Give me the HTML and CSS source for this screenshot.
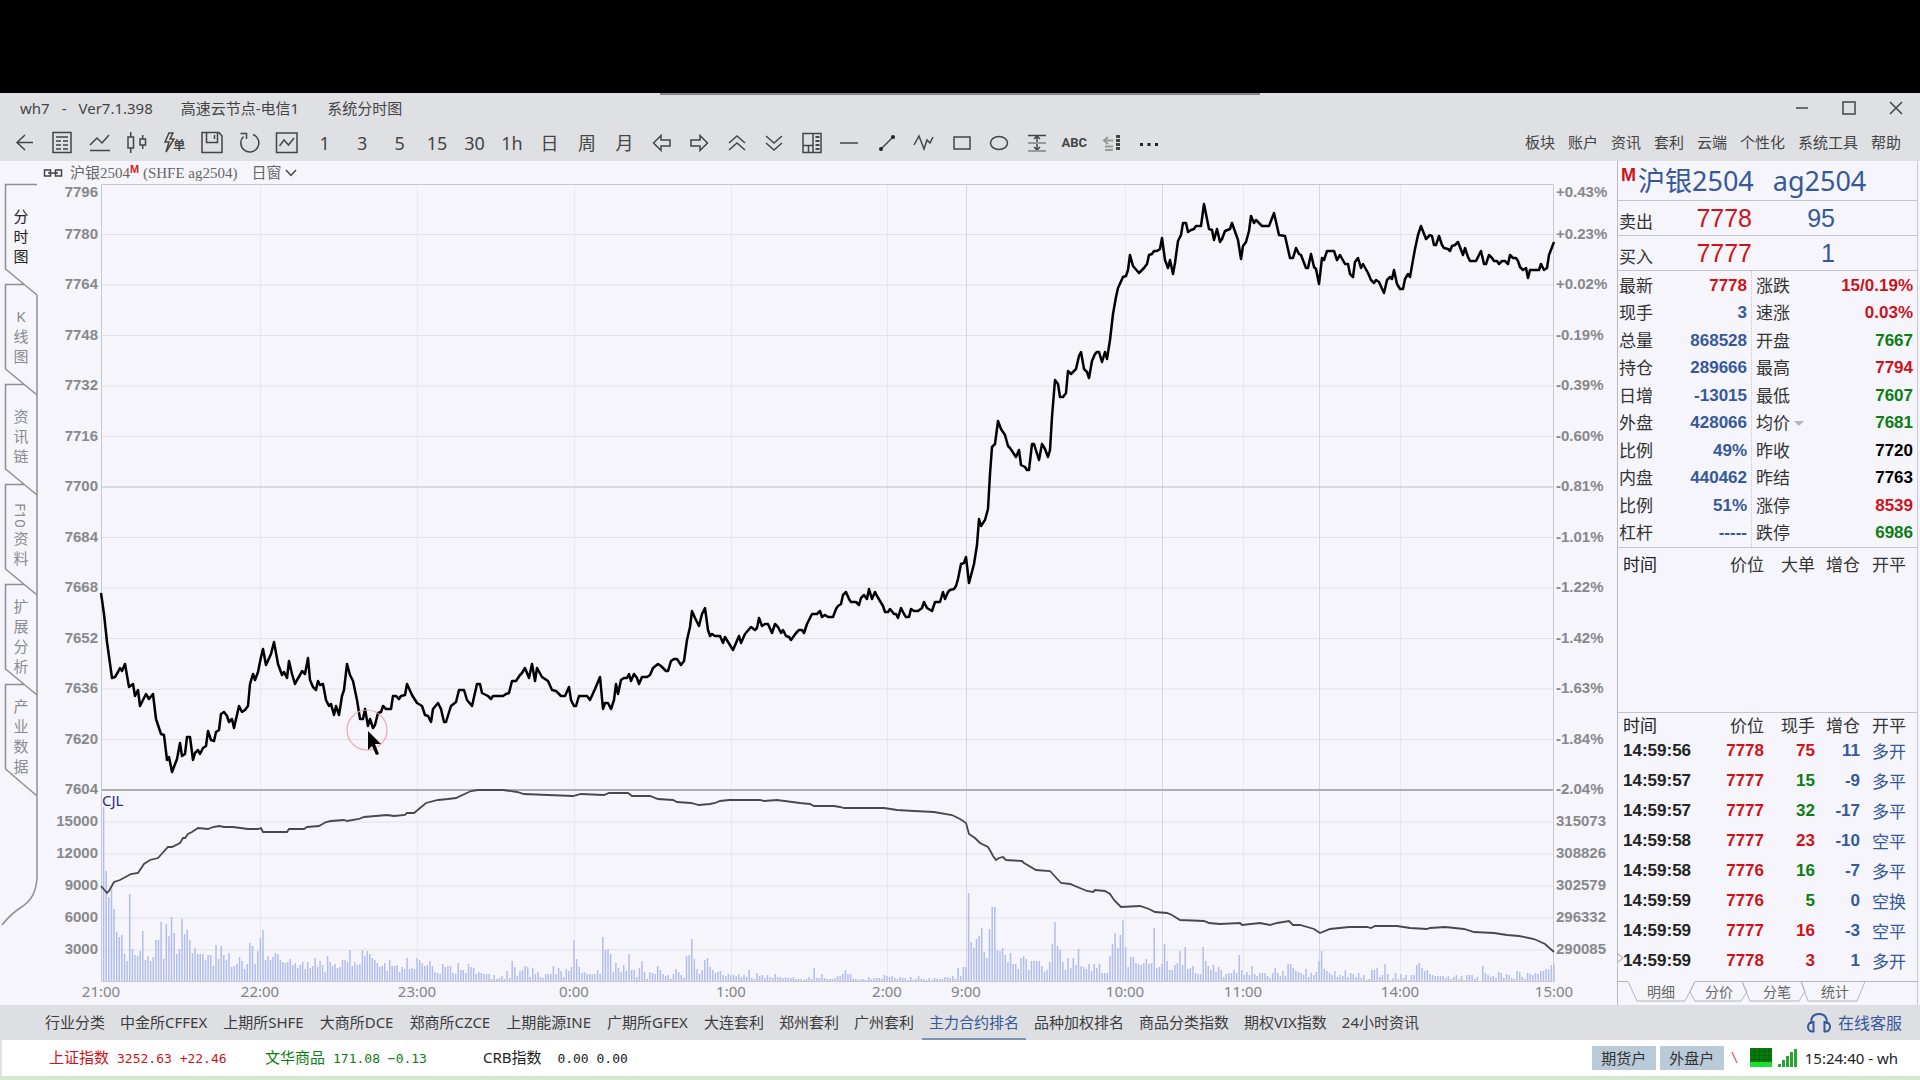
FILE: index.html
```html
<!DOCTYPE html>
<html lang="zh-CN">
<head>
<meta charset="utf-8">
<title>wh7 - 系统分时图</title>
<link rel="stylesheet" href="styles.css">
</head>
<body>
<div class="letterbox"></div>
<div class="app">
  <header class="head">
    <div class="titlebar">
      <span class="ver"><span>wh7</span><span>-</span><span>Ver7.1.398</span></span>
      <span>高速云节点-电信1</span>
      <span>系统分时图</span>
      <div class="winctl">
        <button aria-label="最小化"><svg width="16" height="16" viewBox="0 0 16 16"><path d="M2 8H14"/></svg></button>
        <button aria-label="最大化"><svg width="16" height="16" viewBox="0 0 16 16"><path d="M2 2H14V14H2Z"/></svg></button>
        <button aria-label="关闭"><svg width="16" height="16" viewBox="0 0 16 16"><path d="M2 2L14 14M14 2L2 14"/></svg></button>
      </div>
    </div>
    <div class="toolbar">
      <div class="tools">
        <button aria-label="返回"><svg class="ic" viewBox="0 0 24 24"><path d="M20 11.500H4M12 4L4 11.500L12 19"/></svg></button>
        <button aria-label="报价"><svg class="ic" viewBox="0 0 24 24"><path d="M3 1.500H21V21.500H3ZM6 6H18M6 10H11M6 14H11M6 18H11M13 10H18M13 14H18M13 18H18"/></svg></button>
        <button aria-label="分时"><svg class="ic" viewBox="0 0 24 24"><path d="M2 14L9 7L14 12L21 4M2 19.500H22"/></svg></button>
        <button aria-label="K线"><svg class="ic" viewBox="0 0 24 24"><path d="M3 6H8.500V17H3ZM5.700 1V6M5.700 17V22M15 8H20.500V14H15ZM17.700 4V8M17.700 14V18"/></svg></button>
        <button class="flash" aria-label="闪电下单"><svg class="flash-ic" viewBox="0 0 11 24"><path d="M5 2L1 11H5L2 21L10 8H6L9 2Z"/></svg><span>单</span></button>
        <button aria-label="保存"><svg class="ic" viewBox="0 0 24 24"><path d="M2 1.500H19L22 5V21.500H2ZM6.500 1.500V11.500H17.500V1.500M14.500 4V8"/></svg></button>
        <button aria-label="刷新"><svg class="ic" viewBox="0 0 24 24"><path d="M15 3.500A9 9 0 1 1 5.500 5.500M2.500 2.500H8.500V8"/></svg></button>
        <button aria-label="图表"><svg class="ic" viewBox="0 0 24 24"><path d="M1.500 2H22V21.500H1.500ZM4.500 15L9 9L13.500 14L19 7"/></svg></button>
        <button>1</button><button>3</button><button>5</button><button>15</button><button>30</button><button>1h</button>
        <button>日</button><button>周</button><button>月</button>
        <button aria-label="左移"><svg class="ic" viewBox="0 0 24 24"><path d="M3.500 12L11 4.500V9H20V15H11V19.500Z"/></svg></button>
        <button aria-label="右移"><svg class="ic" viewBox="0 0 24 24"><path d="M20.500 12L13 4.500V9H4V15H13V19.500Z"/></svg></button>
        <button aria-label="放大"><svg class="ic" viewBox="0 0 24 24"><path d="M4 12L12 5L20 12M4 19L12 12L20 19"/></svg></button>
        <button aria-label="缩小"><svg class="ic" viewBox="0 0 24 24"><path d="M4 5L12 12L20 5M4 12L12 19L20 12"/></svg></button>
        <button aria-label="布局"><svg class="ic" viewBox="0 0 24 24"><path d="M3 2.500H21V21.500H3ZM13 2.500V21.500M3 14.500H13M8.500 14.500V21.500"/><path class="dots" d="M17.500 5V20"/></svg></button>
        <button aria-label="水平线"><svg class="ic" viewBox="0 0 24 24"><path d="M3 12H21"/></svg></button>
        <button aria-label="线段"><svg class="ic" viewBox="0 0 24 24"><path d="M6 18L18 6"/><circle class="dot" cx="6" cy="18" r="2"/><circle class="dot" cx="18" cy="6" r="2"/></svg></button>
        <button aria-label="波浪线"><svg class="ic" viewBox="0 0 24 24"><path d="M2 14L7 5L12 18L15 9L18 12L21 6"/></svg></button>
        <button aria-label="矩形"><svg class="ic" viewBox="0 0 24 24"><path d="M4 6H20V18H4Z"/></svg></button>
        <button aria-label="椭圆"><svg class="ic" viewBox="0 0 24 24"><ellipse cx="12" cy="12" rx="8.500" ry="6.500"/></svg></button>
        <button aria-label="黄金分割"><svg class="ic" viewBox="0 0 24 24"><path d="M3 4.500H21M12 5V19M9 8L12 5L15 8M9 16L12 19L15 16"/><path class="soft" d="M3 12H21M3 20H21"/></svg></button>
        <button class="abc">ABC</button>
        <button aria-label="价格标记"><svg class="ic" viewBox="0 0 24 24"><path class="dash" d="M18 4V20"/><path class="soft" d="M4 9.500H13M8 6L4 9.500L8 13M5 15.500H13M5 19H13"/></svg></button>
        <button aria-label="更多"><svg class="ic" viewBox="0 0 24 24"><path class="dot" d="M3 12H6V15H3ZM10.500 12H13.500V15H10.500ZM18 12H21V15H18Z"/></svg></button>
      </div>
      <nav class="menus"><a href="#">板块</a><a href="#">账户</a><a href="#">资讯</a><a href="#">套利</a><a href="#">云端</a><a href="#">个性化</a><a href="#">系统工具</a><a href="#">帮助</a></nav>
    </div>
  </header>

  <main class="main">
    <nav class="sidetabs">
      <svg class="sideline" viewBox="0 0 38 844" preserveAspectRatio="xMinYMin meet">
        <path d="M37 23.500H5.500V108L37 134M24 123.500H5.500V208L37 234M24 223.500H5.500V308L37 334M24 323.500H5.500V408L37 434M24 423.500H5.500V508L37 534M24 523.500H5.500V608L37 635"/>
        <path d="M37 134V717C36 729 33 738 23 745C15 750 9 755 2 764"/>
      </svg>
      <button class="on"><span>分时图</span></button>
      <button><span>K线图</span></button>
      <button><span>资讯链</span></button>
      <button><span><b class="rot">F10</b>资料</span></button>
      <button><span>扩展分析</span></button>
      <button><span>产业数据</span></button>
    </nav>

    <section class="chart">
      <div class="subhead">
        <svg width="20" height="10" viewBox="0 0 20 10"><path d="M1.500 2H7.500V8H1.500ZM12.500 2H18.500V8H12.500ZM5 5H15"/></svg>
        <span class="inst">沪银2504<sup>M</sup> (SHFE ag2504)</span>
        <button class="daywin">日窗<svg width="12" height="8" viewBox="0 0 12 8"><path d="M1 1L6 6.500L11 1"/></svg></button>
      </div>
      <div class="plotrow">
        <div class="axis left">
          <ul class="price"><li><span class="first">7796</span><span>7780</span></li><li><span>7764</span></li><li><span>7748</span></li><li><span>7732</span></li><li><span>7716</span></li><li><span>7700</span></li><li><span>7684</span></li><li><span>7668</span></li><li><span>7652</span></li><li><span>7636</span></li><li><span>7620</span></li><li><span>7604</span></li></ul>
          <ul class="vol"><li><span>15000</span></li><li><span>12000</span></li><li><span>9000</span></li><li><span>6000</span></li><li><span>3000</span></li><li></li></ul>
        </div>
        <div class="plot">
          <svg class="plotsvg" viewBox="0 0 1453 798" preserveAspectRatio="none">
            <path class="grid" d="M0 50.500H1453M0 101H1453M0 151.500H1453M0 202H1453M0 252.500H1453M0 353.500H1453M0 404H1453M0 454.500H1453M0 505H1453M0 555.500H1453M0 638H1453M0 670H1453M0 702H1453M0 734H1453M0 766H1453"/>
            <path class="grid faint" d="M159.500 0V798M316.500 0V798M473.500 0V798M630.500 0V798M786.500 0V798M1024.500 0V798M1142.500 0V798M1299.500 0V798"/>
            <path class="grid session" d="M865.500 0V798M1061.500 0V798M1218.500 0V798"/>
            <path class="grid mid" d="M0 303H1453"/>
            <path id="bars" class="bars"/>
            <path class="grid base" d="M0 606H1453"/>
            <path class="grid frame" d="M0.500 0.500H1452.500V797.500H0.500Z"/>
            <polyline class="oi" points="0,702 6,709 8,707 13,698 19,696 30,690 37,689 43,680 49,676 57,674 67,663 71,663 79,659 82,654 84,654 87,650 91,648 97,644 107,645 112,643 118,642 123,643 132,643 147,645 157,645 160,644 162,648 186,648 188,645 203,645 206,643 218,642 225,638 230,637 243,636 246,637 258,635 263,633 286,631 293,632 304,631 306,629 313,629 325,619 337,616 347,615 355,614 370,607 377,606 402,606 416,608 423,610 472,612 480,610 503,611 508,609 527,609 531,612 549,612 557,615 572,616 576,618 590,619 598,621 609,620 614,619 619,617 628,616 659,616 663,617 676,616 699,619 709,620 713,622 733,622 739,623 743,624 783,624 796,626 813,627 833,628 851,631 859,635 865,639 868,650 871,652 874,654 879,659 887,663 890,668 892,672 895,676 898,674 902,673 905,676 921,677 923,679 935,686 949,687 960,699 969,700 986,707 992,708 994,706 1004,707 1009,710 1013,716 1020,723 1039,722 1048,725 1054,728 1066,729 1071,731 1079,736 1103,737 1108,739 1119,740 1139,739 1141,741 1159,739 1169,741 1176,739 1188,737 1192,741 1199,741 1213,745 1219,749 1229,745 1248,743 1266,743 1270,744 1274,742 1296,742 1309,744 1326,745 1329,744 1344,743 1363,745 1373,748 1393,749 1406,751 1418,752 1433,755 1444,760 1453,768"/>
            <polyline class="px" points="0,409 3,430 6,458 11,494 14,493 17,488 19,484 21,487 24,480 28,503 32,500 34,512 37,506 39,522 45,510 48,515 52,510 55,535 60,550 63,551 66,576 68,573 71,588 76,575 79,559 81,572 84,570 86,553 89,553 92,576 94,569 97,566 99,570 102,564 105,562 107,547 110,556 113,557 115,548 118,546 120,530 123,528 126,532 128,538 131,535 133,544 138,522 141,528 144,526 147,522 149,500 152,490 154,496 157,488 160,473 162,465 165,481 170,470 173,458 177,480 181,491 183,488 186,494 188,477 191,490 194,500 196,496 199,491 201,487 204,490 207,474 209,496 212,503 215,506 217,497 219,501 222,500 225,516 228,522 230,520 233,531 235,522 238,531 241,512 243,506 246,480 249,491 252,497 256,516 259,535 262,535 264,525 267,542 269,535 272,544 274,541 277,529 280,528 282,522 285,525 290,525 292,512 295,512 298,515 300,512 304,511 306,500 311,511 316,519 321,522 324,531 327,532 330,538 332,525 337,519 340,525 343,538 345,538 350,522 355,518 358,506 363,506 366,516 371,522 376,500 379,500 381,509 387,512 390,515 392,512 402,512 405,510 408,509 411,497 415,497 419,491 421,489 424,484 428,494 431,480 434,497 436,484 441,493 447,497 451,506 455,507 460,512 464,512 468,503 470,516 473,522 475,522 478,512 486,512 489,516 494,505 499,493 502,525 504,519 507,519 510,525 513,516 515,500 517,510 520,496 523,494 526,494 528,490 530,497 533,490 536,494 538,500 541,493 546,493 549,491 552,484 557,480 560,482 565,487 567,487 570,477 573,475 576,475 580,481 583,477 586,456 589,443 591,427 594,434 598,442 601,430 604,424 607,446 609,452 611,450 614,452 619,452 622,459 624,453 632,466 638,452 640,459 644,450 650,443 654,446 656,444 658,434 661,442 664,440 667,440 671,449 674,440 677,443 680,449 682,446 685,452 688,453 690,456 695,449 698,446 701,446 703,449 706,440 711,430 716,430 719,427 721,433 724,431 727,433 732,433 735,425 737,422 740,420 742,411 745,408 748,415 750,418 755,418 758,421 760,414 763,411 766,415 768,405 771,415 774,408 776,412 779,417 782,422 784,428 787,428 789,425 793,430 795,430 797,434 800,424 803,430 805,433 808,433 810,425 813,427 817,427 821,424 823,418 826,424 831,427 834,418 839,418 842,408 844,415 847,408 849,406 853,405 855,402 857,395 860,380 863,379 865,373 868,399 873,380 876,361 878,335 880,342 884,336 887,325 889,290 891,263 894,260 897,237 900,245 904,251 907,262 909,264 915,273 918,266 920,281 924,283 926,286 928,286 931,260 933,260 938,276 941,260 944,265 947,273 949,266 951,233 954,196 957,200 959,213 962,213 965,209 967,187 970,190 975,185 978,172 980,168 983,185 986,188 988,194 991,177 994,170 996,168 998,168 1001,178 1004,168 1006,175 1009,156 1012,130 1015,113 1017,104 1022,93 1025,92 1027,86 1029,71 1032,82 1038,89 1043,84 1046,80 1048,71 1051,70 1053,67 1056,67 1059,65 1061,54 1064,76 1067,84 1069,76 1072,90 1074,79 1077,57 1080,51 1082,39 1085,39 1087,48 1090,46 1093,45 1095,42 1100,42 1103,20 1108,45 1111,46 1113,56 1116,45 1119,58 1121,55 1124,47 1129,45 1131,39 1137,56 1140,75 1142,62 1145,58 1148,47 1150,32 1153,39 1155,36 1158,39 1161,42 1168,42 1173,29 1178,51 1184,52 1189,74 1192,74 1195,64 1198,70 1200,71 1205,84 1207,84 1210,70 1213,83 1215,85 1218,100 1221,74 1223,76 1226,67 1233,67 1236,76 1239,71 1244,80 1247,80 1249,90 1252,93 1254,78 1257,74 1260,84 1262,80 1267,89 1270,96 1273,99 1275,96 1278,98 1283,109 1286,96 1289,93 1291,95 1293,86 1296,100 1299,105 1302,105 1304,95 1307,90 1309,93 1312,76 1314,65 1317,51 1320,42 1325,55 1329,51 1331,52 1333,61 1335,61 1338,52 1341,61 1343,64 1347,65 1349,67 1351,62 1354,61 1357,58 1362,71 1364,64 1367,73 1369,77 1375,77 1380,67 1383,80 1385,80 1388,71 1391,74 1393,77 1396,77 1398,80 1401,77 1404,77 1407,80 1409,71 1412,74 1415,74 1417,77 1419,83 1422,86 1425,84 1427,94 1429,86 1438,86 1440,80 1443,86 1446,84 1448,71 1453,58"/>
          </svg>
          <span class="cjl">CJL</span>
          <svg class="pointer" width="44" height="50" viewBox="0 0 44 50"><circle cx="22" cy="22" r="20"/><path d="M23 23V42L27 38L31 47L34 46L30 36H36Z"/></svg>
        </div>
        <div class="axis right">
          <ul class="price"><li><span class="first">+0.43%</span><span>+0.23%</span></li><li><span>+0.02%</span></li><li><span>-0.19%</span></li><li><span>-0.39%</span></li><li><span>-0.60%</span></li><li><span>-0.81%</span></li><li><span>-1.01%</span></li><li><span>-1.22%</span></li><li><span>-1.42%</span></li><li><span>-1.63%</span></li><li><span>-1.84%</span></li><li><span>-2.04%</span></li></ul>
          <ul class="vol"><li><span>315073</span></li><li><span>308826</span></li><li><span>302579</span></li><li><span>296332</span></li><li><span>290085</span></li><li></li></ul>
        </div>
      </div>
      <div class="times"><span>21:00</span><span>22:00</span><span>23:00</span><span>0:00</span><span>1:00</span><span>2:00</span><span>9:00</span><span>10:00</span><span>11:00</span><span>14:00</span><span>15:00</span></div>
    </section>

    <aside class="panel">
      <h1 class="name"><sup>M</sup><span>沪银2504</span><span class="code">ag2504</span></h1>
      <div class="ask"><span>卖出</span><b class="red">7778</b><b class="blue">95</b></div>
      <div class="ask"><span>买入</span><b class="red">7777</b><b class="blue">1</b></div>
      <div class="quotes">
        <dl>
          <div><dt>最新</dt><dd class="red">7778</dd></div>
          <div><dt>现手</dt><dd>3</dd></div>
          <div><dt>总量</dt><dd>868528</dd></div>
          <div><dt>持仓</dt><dd>289666</dd></div>
          <div><dt>日增</dt><dd>-13015</dd></div>
          <div><dt>外盘</dt><dd>428066</dd></div>
          <div><dt>比例</dt><dd>49%</dd></div>
          <div><dt>内盘</dt><dd>440462</dd></div>
          <div><dt>比例</dt><dd>51%</dd></div>
          <div><dt>杠杆</dt><dd>-----</dd></div>
        </dl>
        <dl>
          <div><dt>涨跌</dt><dd class="red">15/0.19%</dd></div>
          <div><dt>速涨</dt><dd class="red">0.03%</dd></div>
          <div><dt>开盘</dt><dd class="green">7667</dd></div>
          <div><dt>最高</dt><dd class="red">7794</dd></div>
          <div><dt>最低</dt><dd class="green">7607</dd></div>
          <div><dt>均价<i class="tri"></i></dt><dd class="green">7681</dd></div>
          <div><dt>昨收</dt><dd class="black">7720</dd></div>
          <div><dt>昨结</dt><dd class="black">7763</dd></div>
          <div><dt>涨停</dt><dd class="red">8539</dd></div>
          <div><dt>跌停</dt><dd class="green">6986</dd></div>
        </dl>
      </div>
      <div class="big">
        <table class="ticks">
          <colgroup><col class="c1"><col class="c2"><col class="c3"><col class="c4"><col class="c5"></colgroup>
          <thead><tr><th>时间</th><th>价位</th><th>大单</th><th>增仓</th><th>开平</th></tr></thead>
        </table>
      </div>
      <div class="trades">
        <table class="ticks">
          <colgroup><col class="c1"><col class="c2"><col class="c3"><col class="c4"><col class="c5"></colgroup>
          <thead><tr><th>时间</th><th>价位</th><th>现手</th><th>增仓</th><th>开平</th></tr></thead>
          <tbody>
            <tr><td>14:59:56</td><td>7778</td><td class="red">75</td><td>11</td><td>多开</td></tr>
            <tr><td>14:59:57</td><td>7777</td><td class="green">15</td><td>-9</td><td>多平</td></tr>
            <tr><td>14:59:57</td><td>7777</td><td class="green">32</td><td>-17</td><td>多平</td></tr>
            <tr><td>14:59:58</td><td>7777</td><td class="red">23</td><td>-10</td><td>空平</td></tr>
            <tr><td>14:59:58</td><td>7776</td><td class="green">16</td><td>-7</td><td>多平</td></tr>
            <tr><td>14:59:59</td><td>7776</td><td class="green">5</td><td>0</td><td>空换</td></tr>
            <tr><td>14:59:59</td><td>7777</td><td class="red">16</td><td>-3</td><td>空平</td></tr>
            <tr><td>14:59:59</td><td>7778</td><td class="red">3</td><td>1</td><td>多开</td></tr>
          </tbody>
        </table>
        <svg class="mark" width="6" height="10" viewBox="0 0 6 10"><path d="M0 1L5 5L0 9"/></svg>
      </div>
      <nav class="ptabs">
        <svg class="ptline" width="300" height="22" viewBox="0 0 300 22"><path d="M0 .5H10L19 20H67L77 .5H300M72 11L77 20H123L129 11M77 .5L72 11M124 .5L132 20H181L187 10M183 .5L190 20H239L247 .5M124 .5L129 11M183 .5L187 10"/></svg>
        <button>明细</button><button>分价</button><button>分笔</button><button>统计</button>
      </nav>
    </aside>
  </main>

  <nav class="markets">
    <a href="#">行业分类</a><a href="#" class="lat">中金所CFFEX</a><a href="#" class="lat">上期所SHFE</a><a href="#" class="lat">大商所DCE</a><a href="#" class="lat">郑商所CZCE</a><a href="#" class="lat">上期能源INE</a><a href="#" class="lat">广期所GFEX</a><a href="#">大连套利</a><a href="#">郑州套利</a><a href="#">广州套利</a><a href="#" class="on">主力合约排名</a><a href="#">品种加权排名</a><a href="#">商品分类指数</a><a href="#">期权VIX指数</a><a href="#">24小时资讯</a>
    <a href="#" class="service"><svg width="24" height="22" viewBox="0 0 24 22"><path d="M4 12V11C4 5 7 2 12 2S20 5 20 11V12M6.500 10V19.500C3 20 1 18 1 15S3 10 6.500 10ZM17.500 10V19.500C21 20 23 18 23 15S21 10 17.500 10Z"/></svg>在线客服</a>
  </nav>
  <footer class="status">
    <span class="red ix1">上证指数<code>3252.63 +22.46</code></span>
    <span class="green ix2">文华商品<code>171.08 −0.13</code></span>
    <span class="ix3">CRB指数 &nbsp;<code>0.00 0.00</code></span>
    <div class="right">
      <button class="acct">期货户</button><button class="acct">外盘户</button>
      <svg width="8" height="16" viewBox="0 0 8 16"><path class="slash" d="M1 2L6 13"/></svg>
      <svg class="led" width="22" height="20" viewBox="0 0 22 20"><path fill="#087a10" d="M0 0H22V14H0Z"/><path fill="#19e02c" d="M0 14H22V19H0Z"/><path stroke="#064d0a" stroke-opacity=".4" d="M0 3.500H22M0 7.500H22M0 11.500H22M4.500 0V14M9.500 0V14M14.500 0V14M18.500 0V14"/></svg>
      <svg class="sig" width="19" height="20" viewBox="0 0 19 20"><path fill="#2ba336" d="M0 16H3V19H0ZM4 12H7V19H4ZM8 8H11V19H8ZM12 4H15V19H12ZM16 1H19V19H16Z"/></svg>
      <span class="clock">15:24:40 - wh</span>
    </div>
  </footer>
  <div class="edge"></div>
</div>
<script src="chart.js"></script>
</body>
</html>
```
FILE: styles.css
```css
* { box-sizing: border-box; }
body {
  margin: 0;
  min-height: 100vh;
  display: flex;
  flex-direction: column;
  background: #000;
  color: #333;
  font: 15px/20px "Noto Sans", "Noto Sans CJK SC", sans-serif;
}
button {
  border: 0;
  padding: 0;
  background: none;
  color: inherit;
  font: inherit;
}
a { color: inherit; text-decoration: none; }
ul, dl, dd { margin: 0; padding: 0; list-style: none; }
svg { fill: none; stroke: #444; stroke-width: 1.5; display: block; }
.red { color: #cf1219; }
.green { color: #0c7d12; }
.blue { color: #35599a; }
.black { color: #000; }

.letterbox { height: 93px; background: #000; }
.app {
  flex: 1;
  display: flex;
  flex-direction: column;
  background: #f5f5fb;
}

/* title bar and toolbar */
.head { background: #dfe0e4; position: relative; color: #444; }
.head::before {
  content: "";
  position: absolute;
  left: 660px;
  top: 0;
  width: 600px;
  height: 2px;
  background: #85868a;
}
.titlebar { display: flex; align-items: center; gap: 28px; height: 32px; padding: 0 0 2px 20px; }
.ver { display: flex; gap: 12px; }
.winctl { display: flex; gap: 31px; margin: 0 16px 0 auto; }
.toolbar { display: flex; align-items: center; justify-content: space-between; height: 36px; }
.tools { display: grid; grid-template-columns: repeat(31, 1fr); width: 1162px; margin-left: 6px; }
.tools button {
  display: flex;
  align-items: center;
  justify-content: center;
  height: 36px;
  font-size: 18px;
}
.ic { width: 24px; height: 24px; }
.flash-ic { width: 11px; height: 24px; }
.flash span { font-size: 12px; font-weight: 700; line-height: 12px; padding-top: 6px; margin-left: -2px; }
.ic .dot { fill: #222; stroke: none; }
.ic .soft { stroke: #999; stroke-width: 2; }
.ic .dash { stroke-width: 4; stroke-dasharray: 3 1; }
.ic .dots { stroke-width: 4; stroke-dasharray: 2 2; }
.tools .abc { font: 700 13px/20px Roboto, sans-serif; }
.menus { display: flex; gap: 13px; padding: 0 19px 2px 0; }

.main {
  flex: 1;
  display: grid;
  grid-template-columns: 38px 1fr 301px;
  padding-right: 2px;
}

/* vertical page tabs */
.sidetabs { position: relative; padding-top: 23px; color: #8b8b90; }
.sideline { position: absolute; left: 0; top: 0; width: 38px; height: 844px; stroke: #8e8e94; }
.sidetabs button {
  position: relative;
  display: flex;
  align-items: center;
  justify-content: center;
  width: 38px;
  height: 100px;
  padding: 3px 0 0 4px;
}
.sidetabs button span { width: 16px; line-height: 20px; word-break: break-all; text-align: center; }
.sidetabs .on { color: #222; }
.rot { display: block; font-weight: 400; writing-mode: vertical-rl; line-height: 16px; }

/* chart */
.chart { display: flex; flex-direction: column; min-width: 0; }
.subhead {
  display: flex;
  align-items: center;
  height: 23px;
  padding-left: 5px;
  font: 15px/20px "Liberation Serif", "Noto Sans CJK SC", serif;
  color: #666;
}
.subhead .inst { padding-left: 7px; }
.subhead sup { font: 700 11px/10px "Liberation Sans", sans-serif; color: #e02020; vertical-align: 5px; }
.daywin { display: flex; align-items: center; gap: 3px; margin-left: 14px; }
.plotrow { flex: 1; display: grid; grid-template-columns: 63px 1fr 63px; }
.plot { position: relative; min-width: 0; }
.plotsvg { position: absolute; left: 0; top: 0; width: 100%; height: 100%; overflow: visible; }
.plotsvg * { vector-effect: non-scaling-stroke; }
.grid { stroke: #e1e1e8; stroke-width: 1; }
.faint { stroke: #e8e8ef; }
.session { stroke: #d6d6de; }
.mid { stroke: #bcbcc4; }
.base { stroke: #aeaeb4; stroke-width: 2; }
.frame { stroke: #c8c8d0; }
.bars { stroke: #b2bdec; stroke-width: 1.5; }
.oi { stroke: #48484c; stroke-width: 1.8; }
.px { stroke: #000; stroke-width: 2.5; stroke-linejoin: round; }
.cjl { position: absolute; left: 1px; top: 76%; color: #2b2b88; }
.pointer { position: absolute; left: 16.8%; top: 65.7%; stroke: #eda6ae; stroke-width: 1.2; }
.pointer path { fill: #000; stroke: none; }

.axis { display: flex; flex-direction: column; font: 700 15px/20px "Liberation Sans", Arial, sans-serif; color: #88888c; }
.axis ul { display: grid; grid-auto-rows: 1fr; }
.axis .price { flex: 606 1 0; }
.axis .vol { flex: 192 1 0; }
.axis li { display: flex; flex-direction: column; justify-content: flex-end; min-height: 0; }
.axis li span { margin-bottom: -9px; }
.axis li .first { margin: -2px 0 auto; }
.left { text-align: right; padding-right: 3px; }
.right ul { padding-left: 2px; }
.times {
  display: grid;
  grid-template-columns: 159fr 157fr 157fr 157fr 156fr 79fr 159fr 118fr 157fr 154fr 0;
  margin: 0 63px;
  height: 23px;
  line-height: 18px;
  color: #838388;
}
.times span { width: 40px; margin-left: -20px; text-align: center; }

/* quote panel */
.panel {
  display: flex;
  flex-direction: column;
  border-left: 1px solid #b9b9c0;
  border-right: 1px solid #c9c9d0;
}
.name { display: flex; height: 39px; margin: 0; padding-left: 3px; font-weight: 400; font-size: 27px; line-height: 40px; color: #35599a; }
.name sup { font: 700 18px/28px "Liberation Sans", sans-serif; color: #cf1219; width: 17px; }
.name .code { margin-left: 19px; }
.ask {
  display: grid;
  grid-template-columns: 54px 79px 83px;
  align-items: center;
  height: 35px;
  padding-left: 1px;
  border-top: 1px solid #c4c4cb;
  font-size: 17px;
}
.ask span { padding-top: 8px; }
.ask b { font: 25px/32px "Liberation Sans", Arial, sans-serif; text-align: right; }
.quotes {
  display: grid;
  grid-template-columns: 134px 1fr;
  height: 278px;
  border-top: 1px solid #c4c4cb;
  border-bottom: 1px solid #c4c4cb;
  font-size: 17px;
}
.quotes dl { display: grid; grid-auto-rows: 1fr; padding: 1px 4px 0 1px; }
.quotes dl:first-child { border-right: 1px dotted #c4c4cb; }
.quotes dl + dl { padding-left: 4px; }
.quotes div { display: flex; align-items: center; justify-content: space-between; }
.quotes dd { font: 700 17px/20px "Liberation Sans", Arial, sans-serif; }
.quotes dd:not([class]) { color: #35599a; }
.quotes dt { display: flex; align-items: center; gap: 4px; }
.tri { border: 5px solid transparent; border-top-color: #b4b4ba; border-bottom: 0; }
.big { flex: 1; }
.ticks { table-layout: fixed; width: 100%; border-collapse: collapse; font-size: 17px; }
.ticks th { font-weight: 400; height: 23px; padding: 0; text-align: right; line-height: 20px; }
.big .ticks th { padding-top: 7px; }
.trades { position: relative; border-top: 1px solid #c4c4cb; height: 269px; }
.trades .ticks th { padding-top: 3px; }
.ticks td { height: 30px; padding: 0; text-align: right; font: 700 17px/20px "Liberation Sans", Arial, sans-serif; }
.ticks tr > :first-child { text-align: left; padding-left: 5px; color: #222; }
.ticks td:nth-child(2) { color: #cf1219; }
.ticks td:nth-child(4) { color: #35599a; }
.ticks tr > :nth-child(5) { text-align: left; padding-left: 12px; }
.ticks td:nth-child(5) { font: 17px/20px "Noto Sans CJK SC", sans-serif; color: #35599a; }
.c1 { width: 82px; }
.c2 { width: 64px; }
.c3 { width: 51px; }
.c4 { width: 45px; }
.mark { position: absolute; left: 0; bottom: 18px; stroke: #999; stroke-width: 1; }
.ptabs { position: relative; display: grid; grid-template-columns: repeat(4, 58px); padding-left: 14px; height: 24px; color: #666; font-size: 14px; }
.ptabs button { position: relative; padding-bottom: 3px; }
.ptline { position: absolute; left: 0; top: 0; stroke: #b4b4bb; stroke-width: 1; }

/* market tabs and status bar */
.markets { display: flex; gap: 1px; height: 35px; padding: 0 18px 0 38px; background: #dddfe3; color: #3c3c40; }
.markets a { padding: 6px 7px 0; line-height: 22px; white-space: nowrap; }
.markets .lat { padding-right: 8px; }
.markets .on { color: #35599a; border-bottom: 2px solid #7b93b4; }
.markets .service { display: flex; align-items: center; gap: 7px; margin-left: auto; padding: 0; font-size: 16px; color: #35599a; }
.service svg { stroke: #35599a; stroke-width: 2; }
.status { display: flex; align-items: center; height: 36px; padding: 0 22px 0 47px; background: #fff; border-left: 2px solid #e2e2e6; }
.status code { font: 13px/20px "DejaVu Sans Mono", monospace; margin-left: 8px; }
.ix1 { width: 216px; }
.ix2 { width: 218px; }
.ix3 { color: #222; }
.status .right { display: flex; align-items: center; margin-left: auto; }
.acct { width: 64px; height: 24px; margin-right: 4px; background: #b9cad9; }
.status .slash { stroke: #e07070; }
.status svg { margin-left: 3px; stroke: none; }
.status .led { margin-left: 11px; stroke-width: 1; }
.status .sig { margin-left: 6px; }
.clock { color: #222; margin-left: 8px; }
.edge { height: 4px; background: #c9f3c2; border-top: 2px solid #dedee2; }
```
FILE: chart.js
```js
// Volume per minute, one entry for each trading hour block: [start x, end x, heights].
const blocks = [
  [0, 162, [175,111,85,93,73,50,45,47,28,21,88,33,27,26,31,51,22,26,21,25,42,42,60,23,58,46,65,49,28,33,63,48,52,42,29,34,28,28,28,22,27,27,16,37,23,36,27,22,29,15,16,18,25,21,13,18,39,36,18,31,44,52]],
  [162, 316, [22,26,22,25,29,28,22,20,19,20,23,17,19,14,17,20,13,20,14,16,24,15,21,17,10,26,20,16,18,14,15,22,22,20,32,16,20,17,18,32,26,31,28,24,22,19,15,16,19,11,22,16,16,17,10,15,13,24,13,14,13,24]],
  [316, 473, [22,19,16,17,21,16,10,9,8,18,15,16,16,9,8,19,12,12,9,18,15,14,8,10,9,8,8,8,3,7,3,4,6,3,11,4,21,15,6,11,12,16,15,5,14,8,10,5,4,8,8,8,16,8,14,11,5,13,11,15,42]],
  [473, 630, [23,15,9,10,8,8,8,8,12,8,45,32,33,28,10,19,14,10,17,11,28,12,12,5,14,21,10,3,10,9,8,16,12,8,6,7,3,8,13,10,7,4,26,27,43,23,13,8,12,22,24,15,12,9,10,11,7,6,8,7]],
  [630, 786, [7,6,8,5,7,5,12,4,3,9,6,7,4,7,5,4,8,5,5,4,5,4,4,5,3,3,3,2,3,5,3,14,4,4,8,4,3,3,3,4,6,6,8,12,8,8,3,3,2,3,3,2,5,3,4,4,4,3,7,6]],
  [786, 865, [5,6,4,3,5,4,4,2,5,2,3,6,3,3,2,4,2,4,3,3,3,5,5,4,6,3,14,6,15,15]],
  [865, 1022, [89,40,34,43,46,54,30,24,53,75,75,32,31,34,27,20,29,18,18,13,24,26,23,12,21,21,21,21,16,10,12,20,38,60,36,32,20,12,24,14,24,17,33,16,15,13,18,11,18,14,18,9,9,9,26,38,49,34,47,62]],
  [1022, 1061, [35,15,25,25,19,18,17,19,23,18,19,54,14,15,18]],
  [1061, 1218, [38,21,12,12,17,19,31,17,35,13,14,16,9,8,8,35,21,16,12,17,10,15,12,5,8,9,9,12,9,27,12,7,10,7,16,8,6,9,9,9,6,4,9,14,9,6,11,6,18,18,14,11,10,9,7,13,5,9,7,10,21]],
  [1218, 1453, [31,13,11,9,7,11,5,7,6,12,5,9,8,5,9,4,7,2,3,12,12,14,5,7,18,8,2,4,9,3,8,4,7,2,7,7,17,19,14,11,12,8,7,6,6,6,6,4,6,3,5,7,3,6,2,7,7,7,3,5,1,16,9,7,5,6,4,10,9,4,8,7,4,3,11,10,5,3,9,8,7,9,8,11,11,13,12,17,18]]
];
let d = "";
for (const [from, to, heights] of blocks) {
  const step = (to - from) / heights.length;
  heights.forEach((h, i) => { d += `M${(from + (i + 1) * step).toFixed(1)} 798v${-h}`; });
}
document.getElementById("bars").setAttribute("d", d);
```
